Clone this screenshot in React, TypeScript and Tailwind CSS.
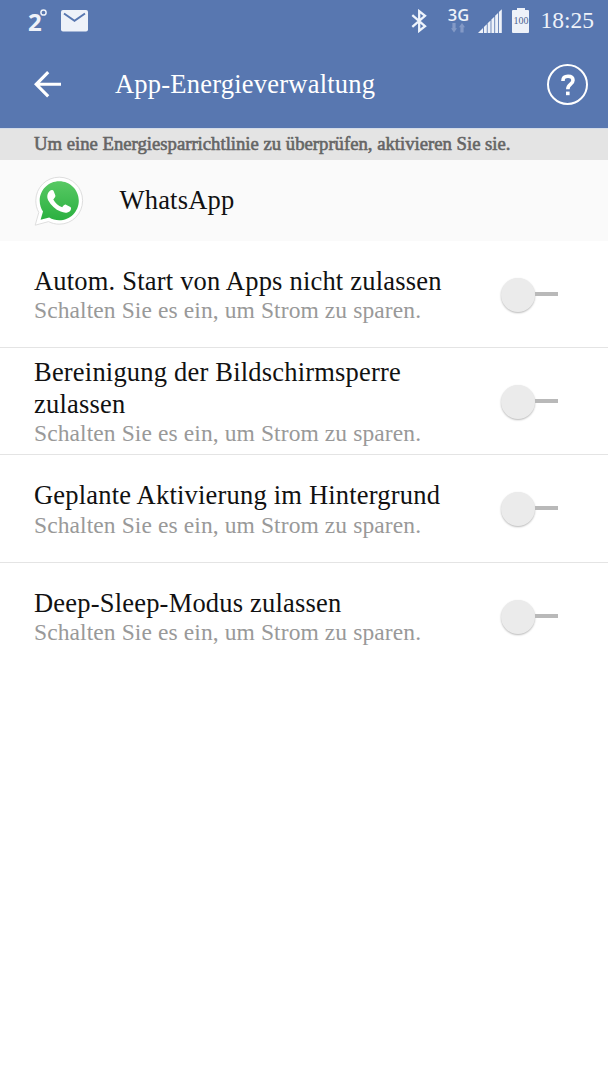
import React from 'react';

interface Option {
  id: string;
  title: string;
}

const OPTIONS: Option[] = [
  { id: 'autostart', title: 'Autom. Start von Apps nicht zulassen' },
  { id: 'screenlock', title: 'Bereinigung der Bildschirmsperre zulassen' },
  { id: 'wakeup', title: 'Geplante Aktivierung im Hintergrund' },
  { id: 'deepsleep', title: 'Deep-Sleep-Modus zulassen' },
];

const SIGNAL_BARS = [0, 1, 2, 3, 4];

const BluetoothIcon = () => (
  <svg className="h-6 w-4" viewBox="0 0 16 24" fill="none" stroke="#eef4fc" strokeWidth="2.3">
    <path d="M1.3 6.2 L14 17.2 L8.2 21.8 V2.2 L14 6.8 L1.3 17.8" />
  </svg>
);

const NetworkIcon = () => (
  <div className="flex h-6 w-[22px] flex-col items-center">
    <span className="h-[14px] font-['Open_Sans',sans-serif] text-[16.5px] leading-[11px] font-semibold text-[#eef2f9]">3G</span>
    <svg className="h-[10px] w-[14px]" viewBox="0 0 14 10" fill="#8399c6">
      <path d="M1.4 0 h3.2 v5.2 h1.4 L3 9.5 L0 5.2 h1.4z" />
      <path d="M9.4 9.5 h3.2 v-5.2 h1.4 L11 0 L8 4.3 h1.4z" />
    </svg>
  </div>
);

const SignalIcon = () => (
  <svg className="h-6 w-6" viewBox="0 0 24 24" fill="#eef2f9">
    <path d="M0 24 L5 19 V24z" />
    {SIGNAL_BARS.map(i => {
      const x = 5.9 + i * 3.75;
      return <path key={i} d={`M${x} 24 V${24 - x} L${x + 2.9} ${21.1 - x} V24z`} />;
    })}
  </svg>
);

const WhatsAppIcon = () => (
  <svg className="h-[50px] w-[50px]" viewBox="0 0 50 50">
    <defs>
      <linearGradient id="wa" x1="0" y1="0" x2="0" y2="1">
        <stop offset="0" stopColor="#58c964" />
        <stop offset="1" stopColor="#2bb040" />
      </linearGradient>
    </defs>
    <path
      d="M25.2 1.2 C38.4 1.2 48.6 11.6 48.6 24.6 C48.6 37.8 38.2 48.2 25.2 48.2 C21.4 48.2 17.7 47.2 14.5 45.6 L1.2 49.2 L4.8 36.4 C2.8 32.9 1.8 28.9 1.8 24.6 C1.8 11.6 12.2 1.2 25.2 1.2z"
      fill="#fff"
      stroke="#dedede"
      strokeWidth="1"
    />
    <path
      d="M25.2 5.2 C36.2 5.2 44.8 13.9 44.8 24.7 C44.8 35.6 36 44.3 25.2 44.3 C21.6 44.3 18.1 43.3 15.2 41.6 L6.6 43.8 L9 35.6 C7 32.4 5.7 28.7 5.7 24.7 C5.7 13.9 14.4 5.2 25.2 5.2z"
      fill="url(#wa)"
    />
    <path
      d="M16.3 14.5 C17.2 13.6 19 13.7 19.6 15 L21.3 19.3 C21.8 20.4 20.6 21.9 19.3 23.4 C21.2 27 24.3 29.7 28.2 31.3 C29.7 29.4 30.8 28.2 32 28.7 L36.4 31 C37.5 31.7 37.1 33.9 36.1 35 C33.6 37.3 30.3 37.1 26.7 35.6 C21.3 33.5 17 29.4 14.3 24.5 C12.5 20.8 13.2 16.9 16.3 14.5z"
      fill="#fff"
    />
  </svg>
);

const Switch = () => (
  <button role="switch" aria-checked={false} className="mt-px flex w-[57px] items-center">
    <span className="h-[34px] w-[34px] rounded-full bg-[#ebebeb] shadow-[0_1px_2px_rgba(0,0,0,0.28)]" />
    <span className="mb-px h-1 flex-1 bg-[#b9b9b9]" />
  </button>
);

const StatusBar = () => (
  <div className="flex h-[41px] items-center pr-[14px] pl-7">
    <div className="flex h-6 w-[19px] items-start font-['Open_Sans',sans-serif] text-[#eef2f9]">
      <span className="pt-px text-[24px] leading-6 font-bold">2</span>
      <svg className="-ml-[2px] h-[7px] w-[7px] shrink-0" viewBox="0 0 7 7" fill="none" stroke="currentColor" strokeWidth="1.5">
        <circle cx="3.5" cy="3.5" r="2.6" />
      </svg>
    </div>
    <svg className="ml-[14px] h-[22px] w-[27px]" viewBox="0 0 27 22">
      <rect width="27" height="21.5" rx="2" fill="#eef2f9" />
      <path d="M3 3.5 L13.5 10.7 L24 3.5" fill="none" stroke="#5877b0" strokeWidth="2" />
    </svg>
    <div className="ml-auto flex items-center">
      <BluetoothIcon />
      <div className="ml-5">
        <NetworkIcon />
      </div>
      <div className="ml-[9px]">
        <SignalIcon />
      </div>
      <div className="ml-[10px] flex h-[25px] w-[17px] flex-col items-center">
        <span className="h-[2px] w-2 bg-[#eef2f9]" />
        <span className="w-full flex-1 rounded-[1px] bg-[#eef2f9] text-center text-[10px] leading-[21px] text-[#4d6491]">100</span>
      </div>
      <span className="mt-px ml-[11px] text-[23.5px] text-[#eef2f9]">18:25</span>
    </div>
  </div>
);

const App: React.FC = () => {
  return (
    <div className="h-[1080px] w-[608px] overflow-hidden bg-white font-['Liberation_Serif','Times_New_Roman',serif]">
      <header className="h-32 bg-[#5877b0] text-white">
        <StatusBar />
        <div className="flex h-[87px] items-center pr-5 pl-[34px]">
          <svg className="h-[27px] w-[27px]" viewBox="0 0 27 27" fill="none" stroke="currentColor" strokeWidth="3.1">
            <path d="M14.2 1.2 L2.2 13.3 L14.2 25.4 M2.2 13.3 H27" />
          </svg>
          <h1 className="mt-px ml-[54px] text-[26.5px] tracking-[0.22px]">App-Energieverwaltung</h1>
          <button className="ml-auto flex h-[41px] w-[41px] items-center justify-center rounded-full border-2 border-white">
            <svg className="h-[22px] w-[14px]" viewBox="0 0 14 22" fill="none" stroke="currentColor" strokeWidth="3.6">
              <path d="M2 7 V6.4 C2 3.5 4 2.2 7 2.2 C10 2.2 12 3.6 12 6.3 C12 10.4 6.8 10 6.8 15.2" />
              <path d="M6.8 17.6 V21.2" />
            </svg>
          </button>
        </div>
      </header>

      <div className="flex h-8 items-center border-t border-[#d3dbe8] bg-[#e4e4e4] pl-[34px] text-[18.7px] text-[#656565] [-webkit-text-stroke:0.6px_#656565]">
        Um eine Energiesparrichtlinie zu überprüfen, aktivieren Sie sie.
      </div>

      <div className="flex h-[81px] items-center bg-[#fafafa] pl-[34px] text-[26.5px] tracking-[0.2px] text-[#111]">
        <WhatsAppIcon />
        <span className="mt-px ml-[35.5px]">WhatsApp</span>
      </div>

      <ul className="divide-y divide-[#e4e4e4]">
        {OPTIONS.map(option => (
          <li key={option.id} className="flex h-[107.2px] items-center justify-between pr-[50px] pl-[34px]">
            <div className="mt-[1.5px] w-[420px]">
              <h2 className="text-[26.5px] leading-[31.5px] tracking-[0.2px] text-[#111]">{option.title}</h2>
              <p className="text-[23.5px] leading-[26.5px] tracking-[0.1px] text-[#999]">Schalten Sie es ein, um Strom zu sparen.</p>
            </div>
            <Switch />
          </li>
        ))}
      </ul>
    </div>
  );
};

export default App;
